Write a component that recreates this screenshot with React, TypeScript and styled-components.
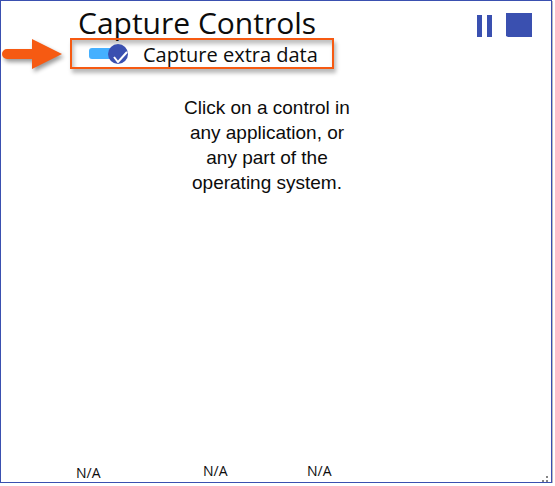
import React, { useState } from "react";
import styled, { createGlobalStyle } from "styled-components";

const GlobalStyle = createGlobalStyle`
  * { box-sizing: border-box; }
  body { margin: 0; background: #fff; font-family: "Open Sans", "Noto Sans", sans-serif; color: #0c0c0c; }
`;

const Window = styled.main`
  display: flex;
  flex-direction: column;
  min-height: calc(100vh - 3px);
  margin-right: 3px;
  border: 1px solid #3a50b0;
  background: #fff;
  box-shadow: 1px 1px 0 #b9b9c0;
`;

const Header = styled.header`
  display: flex;
  justify-content: space-between;
  height: 37px;
  padding: 2px 19px 0 77px;
`;

const Title = styled.h1`
  margin: 0;
  font-size: 30px;
  font-weight: 400;
  line-height: 40px;
  white-space: nowrap;
`;

const Transport = styled.div`
  display: flex;
  gap: 14px;
  padding-top: 10px;
`;

const IconButton = styled.button`
  display: flex;
  height: 26px;
  padding: 0;
  border: 0;
  background: none;
  cursor: pointer;
`;

const OptionRow = styled.section`
  display: flex;
  align-items: center;
  gap: 3px;
`;

const Arrow = styled.svg`
  flex: none;
  overflow: visible;
  filter: drop-shadow(2px 3px 2px rgba(0, 0, 0, 0.4));
`;

const Highlight = styled.div`
  flex: 0 1 264px;
  height: 31px;
  padding-left: 16px;
  border: 2px solid #f65a12;
  box-shadow: 2px 4px 4px rgba(0, 0, 0, 0.28), inset 2px 4px 4px rgba(0, 0, 0, 0.25);
`;

const ToggleLabel = styled.label`
  display: flex;
  align-items: flex-start;
  gap: 13px;
  font-size: 20px;
  line-height: 29px;
  white-space: nowrap;
  cursor: pointer;
`;

const Switch = styled.span`
  display: grid;
  flex: none;
  padding-top: 3px;
`;

const SwitchInput = styled.input`
  grid-area: 1 / 1;
  width: 42px;
  height: 22px;
  margin: 0;
  opacity: 0;
  cursor: pointer;
`;

const SwitchArt = styled.svg`
  grid-area: 1 / 1;
  pointer-events: none;
`;

const Prompt = styled.p`
  align-self: center;
  width: 184px;
  margin: 26px 18px 0 0;
  font-family: "Liberation Sans", Arial, sans-serif;
  font-size: 19px;
  line-height: 25px;
  text-align: center;
`;

const Footer = styled.footer`
  display: flex;
  align-items: flex-end;
  justify-content: space-between;
  margin-top: auto;
`;

const Readings = styled.div`
  display: grid;
  grid-template-columns: 127px 104px auto;
  padding-left: 75px;
`;

const Reading = styled.span<{ $lift?: boolean }>`
  padding-top: ${({ $lift }) => ($lift ? 0 : 2)}px;
  font-size: 14px;
  line-height: 18px;
`;

const Grip = styled.svg`
  flex: none;
`;

export default function App() {
  const [extra, setExtra] = useState(true);
  return (
    <>
      <GlobalStyle />
      <Window>
        <Header>
          <Title>Capture Controls</Title>
          <Transport>
            <IconButton type="button" aria-label="Pause">
              <svg width="16" height="26" viewBox="0 0 16 26" fill="#3a50b0">
                <path d="M1 2h5v22H1zM11 2h5v22h-5z" />
              </svg>
            </IconButton>
            <IconButton type="button" aria-label="Stop">
              <svg width="26" height="26" viewBox="0 0 26 26" fill="#3a50b0">
                <path d="M0 0h26v24H2L0 23z" />
              </svg>
            </IconButton>
          </Transport>
        </Header>
        <OptionRow>
          <Arrow width="66" height="30" viewBox="0 0 66 30" aria-hidden="true">
            <path d="M6 10H31V0L61 15L31 30V20H6A5 5 0 0 1 6 10Z" fill="#f65a12" />
          </Arrow>
          <Highlight>
            <ToggleLabel>
              <Switch>
                <SwitchInput
                  type="checkbox"
                  role="switch"
                  checked={extra}
                  onChange={(e) => setExtra(e.target.checked)}
                />
                <SwitchArt width="42" height="22" viewBox="0 0 42 22" aria-hidden="true">
                  <rect x="1" y="5" width="30" height="11" rx="3" fill="#45b0ff" />
                  <g transform={extra ? undefined : "translate(-20 0)"}>
                    <circle cx="30" cy="11" r="10" fill="#3a50b0" />
                    {extra && (
                      <path d="M26 14L30 19L39 9" fill="none" stroke="#fff" strokeWidth="2" />
                    )}
                  </g>
                </SwitchArt>
              </Switch>
              Capture extra data
            </ToggleLabel>
          </Highlight>
        </OptionRow>
        <Prompt>Click on a control in any application, or any part of the operating system.</Prompt>
        <Footer>
          <Readings>
            <Reading>N/A</Reading>
            <Reading $lift>N/A</Reading>
            <Reading $lift>N/A</Reading>
          </Readings>
          <Grip width="9" height="6" viewBox="0 0 9 6" fill="#858585" aria-hidden="true">
            <path d="M4 0h2v2H4zM0 4h2v2H0zM4 4h2v2H4z" />
          </Grip>
        </Footer>
      </Window>
    </>
  );
}
